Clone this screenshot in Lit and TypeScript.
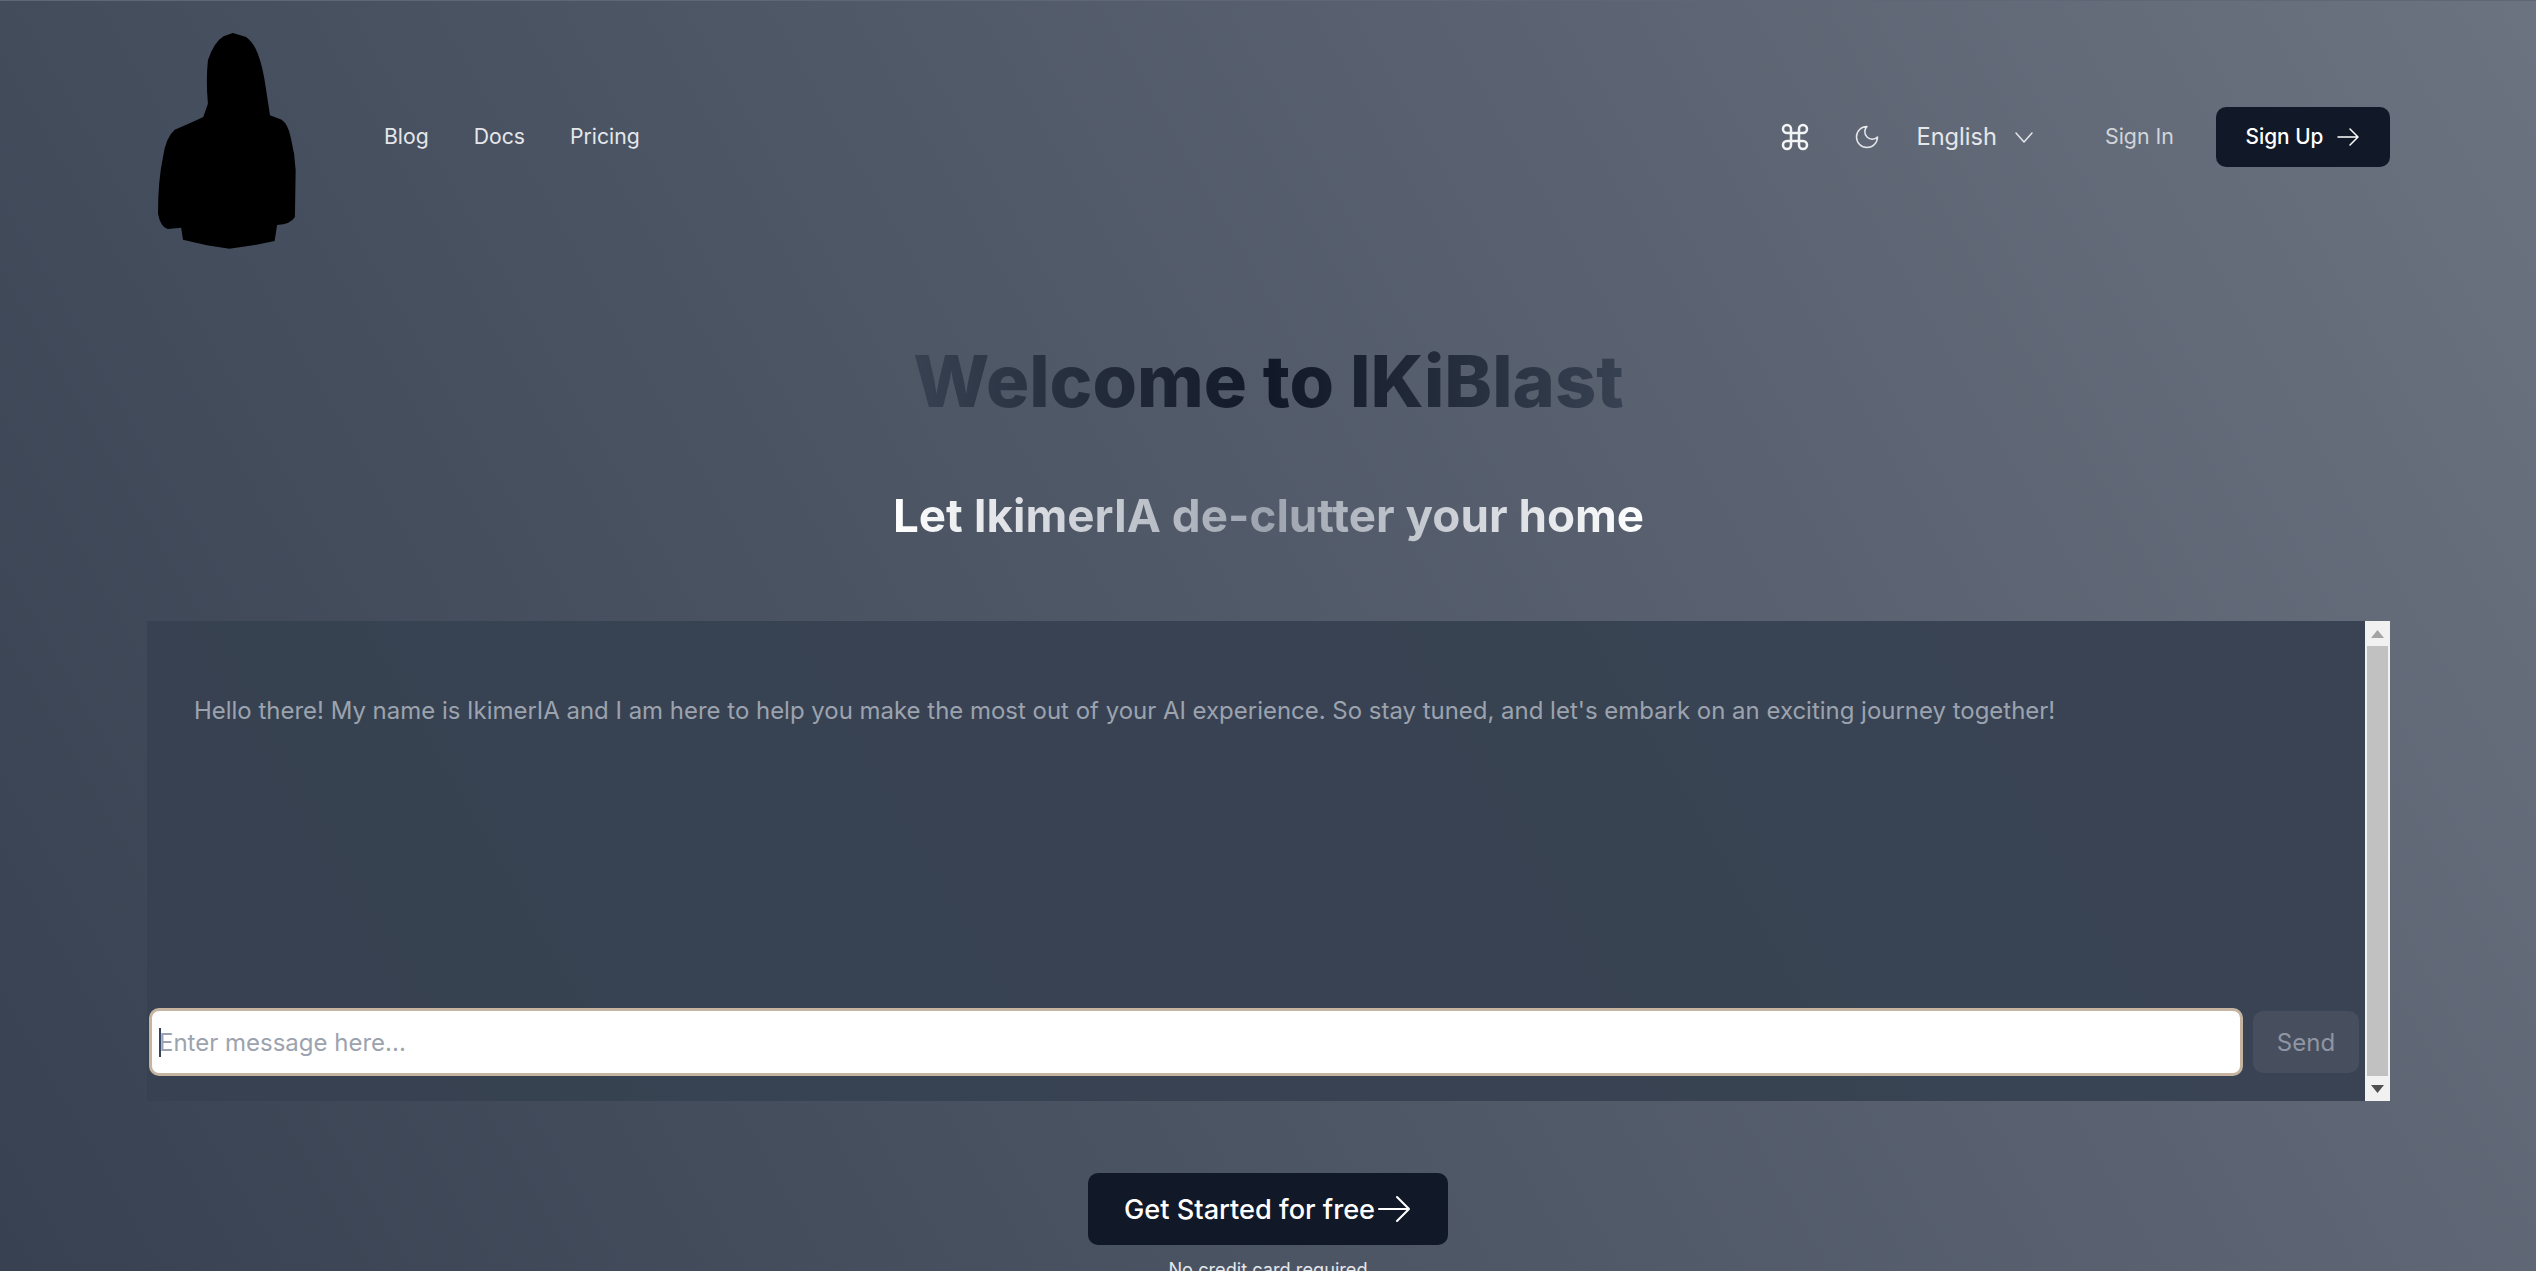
import { LitElement, html, css } from "lit";
import { customElement } from "lit/decorators.js";

const arrow = (w: number, sw: number) => html`<svg width=${w} height=${w} viewBox="0 0 24 24" fill="none" stroke="currentColor" stroke-width=${sw} stroke-linecap="round" stroke-linejoin="round"><path d="M2 12h20M14 4l8 8-8 8"/></svg>`;

@customElement("app-root")
export class AppRoot extends LitElement {
  static styles = css`
    :host {
      display: block;
      height: 100vh;
      overflow: hidden;
      font-family: Inter, "Liberation Sans", sans-serif;
      background: linear-gradient(60deg, #374151 0%, #6b7280 100%);
      border-top: 1px solid #5f6776;
      box-sizing: border-box;
    }
    .wrap { width: 2243px; margin: 0 0 0 147px; }
    header { display: flex; align-items: center; height: 272px; padding-left: 11px; box-sizing: border-box; }
    .logo { display: block; flex: none; margin-right: 88px; margin-top: 8px; }
    nav { display: flex; gap: 45px; font-size: 21.2px; color: #e5e7eb; padding-bottom: 2px; }
    .right { margin-left: auto; display: flex; align-items: center; }
    .icon { display: block; flex: none; }
    .cmd { margin-right: 42px; color: #f3f4f6; }
    .moon { color: #e5e7eb; }
    .lang { display: flex; align-items: center; gap: 15px; font-size: 23.6px; color: #e5e7eb; margin-left: 36px; margin-right: 69px; }
    .lang span { padding-bottom: 2px; }
    .signin { font-size: 21.4px; color: #d1d5db; margin-right: 42px; padding-bottom: 2px; }
    .signup { display: flex; align-items: center; justify-content: center; gap: 13px; width: 174px; height: 60px; border-radius: 10px; background: #111827; color: #fff; font-size: 20.8px; font-weight: 500; }
    .signup span { padding-bottom: 2px; }
    h1 { text-align: center; font-size: 72px; line-height: 80px; font-weight: 800; color: transparent; background: linear-gradient(to right, #374151, #111827, #374151); -webkit-background-clip: text; background-clip: text; width: max-content; margin: 68px auto 0; }
    h2 { margin: 63px auto 0; width: max-content; font-size: 45.8px; line-height: 64px; font-weight: 700; color: transparent; background: linear-gradient(to right, #ffffff, #9ca3af, #ffffff); -webkit-background-clip: text; background-clip: text; }
    .chat { margin-top: 73px; height: 480px; display: flex; background: rgba(55, 65, 81, 0.95); }
    .main { flex: 1; display: flex; flex-direction: column; min-width: 0; }
    .msg { flex: 1; padding: 74px 0 0 47px; font-size: 23.96px; line-height: 32px; color: #9ca3af; }
    .bar { display: flex; align-items: center; gap: 10px; padding: 0 6px 25px 2px; }
    .input { flex: 1; height: 68px; box-sizing: border-box; border: 3px solid #c5b4a0; border-radius: 10px; background: #fff; display: flex; align-items: center; padding-left: 7px; font-size: 24px; color: #9ca3af; }
    .caret { width: 2px; height: 29px; background: #374151; margin-right: -2px; }
    .send { width: 106px; height: 62px; border-radius: 10px; background: #474e5e; color: #8f95a3; font-size: 24px; display: flex; align-items: center; justify-content: center; }
    .scroll { width: 25px; flex: none; background: #f1f1f1; display: flex; flex-direction: column; align-items: center; }
    .btn { height: 25px; flex: none; display: flex; align-items: center; justify-content: center; }
    .thumb { flex: 1; width: 21px; background: #c1c1c1; }
    .foot { display: flex; flex-direction: column; align-items: center; margin-top: 72px; padding-right: 1px; }
    .cta { display: flex; align-items: center; height: 72px; width: 360px; justify-content: center; box-sizing: border-box; border-radius: 10px; background: #111827; color: #fff; font-size: 27.2px; font-weight: 500; gap: 1px; }
    .note { margin-top: 10px; font-size: 18.2px; line-height: 28px; color: #e5e7eb; }
  `;

  render() {
    return html`
      <div class="wrap">
        <header>
          <svg class="logo" width="138" height="216" viewBox="78 98 387 648" preserveAspectRatio="none"><path fill="#000" d="M288 98 L325 110 Q345 125 358 160 Q372 200 380 260 L392 345 L425 358 Q443 372 450 410 Q462 460 464 510 L462 650 Q450 672 412 674 L405 722 L345 735 L278 745 L215 735 L148 718 L143 682 L105 686 Q85 680 78 640 Q78 540 92 470 Q100 410 125 388 Q170 368 205 350 L218 310 Q212 240 218 180 Q235 125 262 108 Z"/></svg>
          <nav><span>Blog</span><span>Docs</span><span>Pricing</span></nav>
          <div class="right">
            <svg class="icon cmd" width="32" height="32" viewBox="0 0 24 24" fill="none" stroke="currentColor" stroke-width="1.9" stroke-linecap="round" stroke-linejoin="round"><path d="M15 6v12a3 3 0 1 0 3-3H6a3 3 0 1 0 3 3V6a3 3 0 1 0-3 3h12a3 3 0 1 0-3-3"/></svg>
            <svg class="icon moon" width="28" height="28" viewBox="0 0 24 24" fill="none" stroke="currentColor" stroke-width="1.3" stroke-linecap="round" stroke-linejoin="round"><path d="M12 3a6 6 0 0 0 9 9 9 9 0 1 1-9-9Z"/></svg>
            <div class="lang"><span>English</span><svg width="24" height="24" viewBox="0 0 24 24" fill="none" stroke="currentColor" stroke-width="1.5" stroke-linecap="round" stroke-linejoin="round"><path d="m4 8 8 9 8-9"/></svg></div>
            <span class="signin">Sign In</span>
            <div class="signup"><span>Sign Up</span>${arrow(24, 1.5)}</div>
          </div>
        </header>
        <h1>Welcome to IKiBlast</h1>
        <h2>Let IkimerIA de-clutter your home</h2>
        <section class="chat">
          <div class="main">
            <div class="msg">Hello there! My name is IkimerIA and I am here to help you make the most out of your AI experience. So stay tuned, and let's embark on an exciting journey together!</div>
            <div class="bar">
              <div class="input"><i class="caret"></i><span>Enter message here...</span></div>
              <div class="send">Send</div>
            </div>
          </div>
          <div class="scroll">
            <div class="btn"><svg width="13" height="8" viewBox="0 0 13 8"><path fill="#a3a3a3" d="M6.5 0 13 8H0Z"/></svg></div>
            <div class="thumb"></div>
            <div class="btn"><svg width="13" height="8" viewBox="0 0 13 8"><path fill="#505050" d="M0 0h13L6.5 8Z"/></svg></div>
          </div>
        </section>
        <div class="foot">
          <div class="cta"><span>Get Started for free</span>${arrow(36, 1.4)}</div>
          <div class="note">No credit card required</div>
        </div>
      </div>
    `;
  }
}
